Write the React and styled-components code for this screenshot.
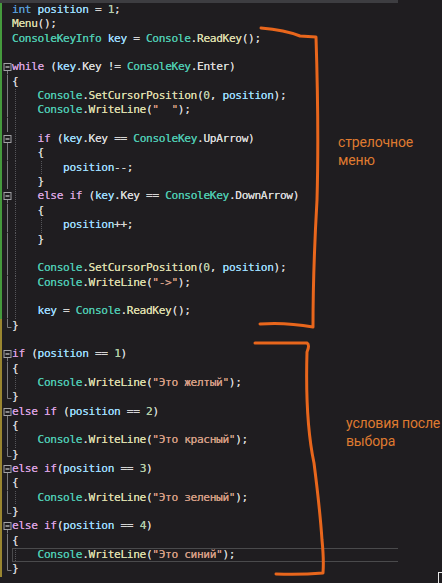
import React from "react";
import styled, { createGlobalStyle } from "styled-components";

const CW = 6.38;
const LH = 14.35;

const Global = createGlobalStyle`
  html, body {
    margin: 0;
    padding: 0;
    background: #1f1d20;
  }
`;

const Screen = styled.div`
  position: relative;
  width: 442px;
  height: 583px;
  overflow: hidden;
  background: #1f1d20;
`;

const TopBar = styled.div`
  width: 398px;
  height: 3px;
  background: #3d3d41;
`;

const Editor = styled.div`
  display: flex;
  flex-direction: column;
  font-family: "DejaVu Sans Mono", "Liberation Mono", monospace;
  font-size: 11.2px;
  letter-spacing: -0.36px;
  color: #dcdcdc;
  text-shadow: 0 0 0.4px currentColor;
`;

const Row = styled.div`
  display: flex;
  height: ${LH}px;
  line-height: ${LH}px;
  white-space: pre;
`;

const Change = styled.span`
  flex: none;
  width: 2px;
  background: ${(p) => p.$c};
`;

const GutterCell = styled.svg`
  flex: none;
  width: 10px;
  height: ${LH}px;
  display: block;
`;

const Code = styled.span`
  flex: none;
  width: 386px;
  display: flex;
  align-items: stretch;
  box-shadow: ${(p) =>
    p.$current
      ? "inset 0 1px #4a4a4c, inset 0 -1px #4a4a4c, inset 1px 0 #4a4a4c"
      : "none"};
`;

const Indent = styled.span`
  flex: none;
  width: ${4 * CW}px;
  background-image: linear-gradient(#56565a 50%, transparent 50%);
  background-size: 1px 2px;
  background-repeat: repeat-y;
  background-position: 3px 0;
`;

const COLORS = {
  kw: "#569cd6",
  ctrl: "#d8a0df",
  type: "#4ec9b0",
  fn: "#dcdcaa",
  var: "#9cdcfe",
  prop: "#dadada",
  num: "#b5cea8",
  str: "#d69d85",
  punct: "#d4d4d4",
};

const Tok = styled.span`
  color: ${(p) => COLORS[p.$k]};
`;

const Note = styled.div`
  position: absolute;
  left: ${(p) => p.$x}px;
  top: ${(p) => p.$y}px;
  font-family: Roboto, "Noto Sans", sans-serif;
  font-size: 14px;
  letter-spacing: -0.15px;
  line-height: 18px;
  white-space: nowrap;
  color: #df7a30;
`;

const Marks = styled.svg`
  position: absolute;
  left: 0;
  top: 0;
  width: 442px;
  height: 583px;
  pointer-events: none;
`;

const Corner = styled.div`
  position: absolute;
  right: 0;
  bottom: 0;
  width: 3px;
  height: 10px;
  border-left: 1px solid #e8e8e8;
  border-top: 1px solid #e8e8e8;
`;

const LINES = [
  "int position = 1;",
  "Menu();",
  "ConsoleKeyInfo key = Console.ReadKey();",
  "",
  "while (key.Key != ConsoleKey.Enter)",
  "{",
  "    Console.SetCursorPosition(0, position);",
  '    Console.WriteLine("  ");',
  "    ",
  "    if (key.Key == ConsoleKey.UpArrow)",
  "    {",
  "        position--;",
  "    }",
  "    else if (key.Key == ConsoleKey.DownArrow)",
  "    {",
  "        position++;",
  "    }",
  "    ",
  "    Console.SetCursorPosition(0, position);",
  '    Console.WriteLine("->");',
  "    ",
  "    key = Console.ReadKey();",
  "}",
  "",
  "if (position == 1)",
  "{",
  '    Console.WriteLine("Это желтый");',
  "}",
  "else if (position == 2)",
  "{",
  '    Console.WriteLine("Это красный");',
  "}",
  "else if(position == 3)",
  "{",
  '    Console.WriteLine("Это зеленый");',
  "}",
  "else if(position == 4)",
  "{",
  '    Console.WriteLine("Это синий");',
  "}",
];

// f = fold box, | = fold line, L = fold end
const GUTTER = [
  "", "", "", "",
  "f", "|", "|", "|", "|", "f", "|", "|", "|", "f", "|", "|", "|", "|", "|", "|", "|", "|", "L",
  "",
  "f", "|", "|", "L",
  "f", "|", "|", "L",
  "f", "|", "|", "L",
  "f", "|", "|", "L",
];

const TYPES = new Set(["Console", "ConsoleKey", "ConsoleKeyInfo"]);
const CTRL = new Set(["while", "if", "else"]);
const KW = new Set(["int"]);
const VARS = new Set(["position", "key"]);

function tokenize(src) {
  const parts = src.match(/"[^"]*"|[A-Za-z_]\w*|\d+|\s+|./g) || [];
  return parts.map((s, i) => {
    let k = "punct";
    if (s[0] === '"') k = "str";
    else if (/^\d/.test(s)) k = "num";
    else if (/^[A-Za-z_]/.test(s)) {
      const next = parts.slice(i + 1).find((p) => p.trim() !== "");
      if (KW.has(s)) k = "kw";
      else if (CTRL.has(s)) k = "ctrl";
      else if (TYPES.has(s)) k = "type";
      else if (VARS.has(s)) k = "var";
      else if (next === "(") k = "fn";
      else k = "prop";
    }
    return { s, k };
  });
}

const GutterMark = ({ kind }) => (
  <GutterCell viewBox={`0 0 10 ${LH}`}>
    {kind === "|" && <line x1="5.5" y1="0" x2="5.5" y2={LH} stroke="#7c7c80" strokeWidth="1" />}
    {kind === "L" && (
      <path d={`M5.5 0 V8.5 H9.5`} fill="none" stroke="#7c7c80" strokeWidth="1" />
    )}
    {kind === "f" && (
      <>
        <line x1="5.5" y1="10.5" x2="5.5" y2={LH} stroke="#7c7c80" strokeWidth="1" />
        <rect x="2" y="3.5" width="7" height="7" fill="#1f1d20" stroke="#a3a3a6" strokeWidth="1" />
        <line x1="3.5" y1="7" x2="7.5" y2="7" stroke="#d0d0d0" strokeWidth="1.2" />
      </>
    )}
  </GutterCell>
);

const CodeLine = ({ text, index }) => {
  const lead = text.match(/^ */)[0].length;
  const levels = Math.floor(lead / 4);
  const body = text.slice(levels * 4);
  return (
    <Row>
      <Change $c={index <= 21 ? "#459a3d" : "#9a8630"} />
      <GutterMark kind={GUTTER[index]} />
      <Code $current={index === 38}>
        {Array.from({ length: levels }).map((_, i) => (
          <Indent key={i} />
        ))}
        <span>
          {tokenize(body).map((t, i) => (
            <Tok key={i} $k={t.k}>
              {t.s}
            </Tok>
          ))}
        </span>
      </Code>
    </Row>
  );
};

export default function App() {
  return (
    <>
      <Global />
      <Screen>
        <TopBar />
        <Editor>
          {LINES.map((l, i) => (
            <CodeLine key={i} text={l} index={i} />
          ))}
        </Editor>

        <Marks viewBox="0 0 442 583">
          <g fill="none" stroke="#e8661c" strokeWidth="3" strokeLinecap="round" strokeLinejoin="round">
            <path d="M261 28 Q 285 30 300 36 L 316 37 Q 319 130 317 200 Q 313 270 313 327 Q 285 322 260 324" />
            <path d="M255 343 L 307 343 Q 310 345 307 352 Q 305 420 314 463 Q 320 510 322 540 Q 324 560 323 573 Q 300 575 276 574" />
          </g>
        </Marks>

        <Note $x={338} $y={133}>
          стрелочное
          <br />
          меню
        </Note>
        <Note $x={346} $y={414}>
          условия после
          <br />
          выбора
        </Note>
        <Corner />
      </Screen>
    </>
  );
}
